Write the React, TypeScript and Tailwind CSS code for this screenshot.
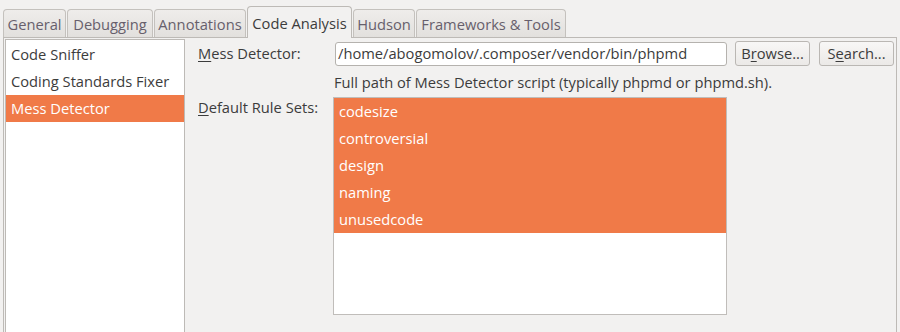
import React from "react";

const tabs = [
  { name: "General", w: "w-[63px]" },
  { name: "Debugging", w: "w-[86px]" },
  { name: "Annotations", w: "w-[92px]" },
  { name: "Code Analysis", w: "w-[105px]", active: true },
  { name: "Hudson", w: "w-[62px]" },
  { name: "Frameworks & Tools", w: "w-[150px]" },
];

const leftItems = ["Code Sniffer", "Coding Standards Fixer", "Mess Detector"];
const rules = ["codesize", "controversial", "design", "naming", "unusedcode"];

export default function App() {
  return (
    <div
      className="w-[900px] h-[332px] overflow-hidden bg-[#f2f1f0] text-[#3c3c3c] text-[14.7px] flex flex-col"
      style={{ fontFamily: '"Open Sans", "DejaVu Sans", sans-serif' }}
    >
      <div className="flex items-end gap-[1px] pl-[3px] pt-[6px] h-[37px] shrink-0">
        {tabs.map((t) =>
          t.active ? (
            <div
              key={t.name}
              className={`${t.w} h-[32px] -mb-[1px] relative z-10 flex items-center justify-center border border-b-0 border-[#bdbab6] rounded-t-[4px] bg-[#f2f1f0] text-[#3c3c3c] pt-[1px] whitespace-nowrap`}
            >
              {t.name}
            </div>
          ) : (
            <div
              key={t.name}
              className={`${t.w} h-[28px] flex items-center justify-center border border-b-0 border-[#c4c1bd] rounded-t-[4px] bg-gradient-to-b from-[#efedeb] to-[#e2e0dd] text-[#675f6c] pt-[2px] whitespace-nowrap`}
            >
              {t.name}
            </div>
          )
        )}
      </div>
      <div className="h-[330px] shrink-0 mx-[3px] border border-[#bdbab6] flex pt-[1px] pl-[1px]">
        <div className="w-[180px] shrink-0 border border-b-0 border-[#bdbab6] bg-white pt-[1px] h-[400px]">
          {leftItems.map((it, i) => (
            <div
              key={it}
              className={`h-[27px] flex items-center pl-[5px] whitespace-nowrap ${
                i === 2 ? "bg-[#f07a48] text-white" : "text-[#3c3c3c]"
              }`}
            >
              {it}
            </div>
          ))}
        </div>
        <div className="flex-1 pl-[13px] pt-[2px] pr-[2px]">
          <div className="flex items-center h-[25px]">
            <div className="w-[135px] shrink-0 whitespace-nowrap">
              <span className="underline underline-offset-2">M</span>ess Detector:
            </div>
            <div className="ml-[2px] w-[392px] h-[24px] border border-[#b5b2ae] rounded-[3px] bg-white flex items-center pl-[2px] overflow-hidden whitespace-nowrap">
              /home/abogomolov/.composer/vendor/bin/phpmd
            </div>
            <button className="ml-[8px] w-[75px] h-[25px] border border-[#bab7b3] rounded-[3px] bg-gradient-to-b from-[#f8f7f6] to-[#ebe9e7] flex items-center justify-center text-[#3c3c3c] whitespace-nowrap">
              B<span className="underline underline-offset-2">r</span>owse...
            </button>
            <button className="ml-[9px] w-[75px] h-[25px] border border-[#bab7b3] rounded-[3px] bg-gradient-to-b from-[#f8f7f6] to-[#ebe9e7] flex items-center justify-center text-[#3c3c3c] whitespace-nowrap">
              S<span className="underline underline-offset-2">e</span>arch...
            </button>
          </div>
          <div className="flex">
            <div className="w-[135px] shrink-0" />
            <div className="mt-[6px] leading-[20px] pl-[1px] whitespace-nowrap">
              Full path of Mess Detector script (typically phpmd or phpmd.sh).
            </div>
          </div>
          <div className="flex mt-[5px]">
            <div className="w-[135px] shrink-0 leading-[20px] whitespace-nowrap">
              <span className="underline underline-offset-2">D</span>efault Rule Sets:
            </div>
            <div className="w-[394px] h-[218px] border border-[#c0bdba] bg-white">
              {rules.map((r) => (
                <div key={r} className="h-[27px] flex items-center pl-[5px] bg-[#f07a48] text-white">
                  {r}
                </div>
              ))}
            </div>
          </div>
        </div>
      </div>
    </div>
  );
}
